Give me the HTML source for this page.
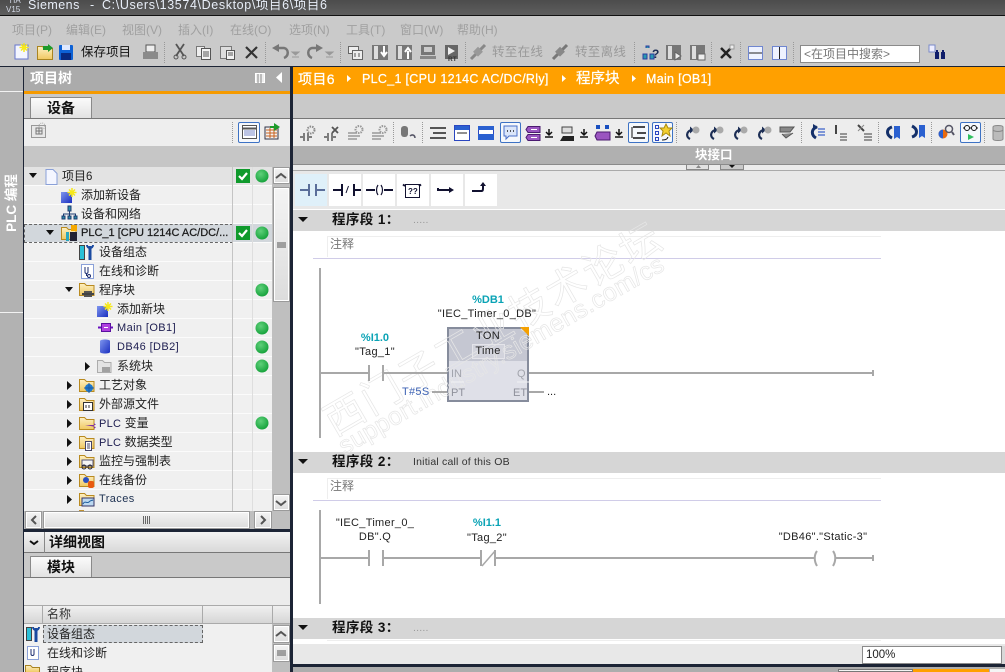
<!DOCTYPE html>
<html><head><meta charset="utf-8">
<style>
html,body{margin:0;padding:0;background:#fff}
#p{position:relative;width:1005px;height:672px;overflow:hidden;background:#fff;font-family:"Liberation Sans","Noto Sans CJK SC",sans-serif;font-size:12px;color:#222}
#p div{position:absolute}
.t{white-space:nowrap;line-height:16px;height:16px}
.m{color:#a0a0a0;top:22px;font-size:12px}
.g{color:#9a9a9a;top:44px;font-size:12.5px;letter-spacing:.3px}
.r{left:24px;width:248px;height:18px;background:#f0f0f0;border-bottom:1px solid #fbfbfb}
.c{text-align:center;font-size:11px;color:#222;letter-spacing:.3px}
.ti{color:#0aa3b5;font-weight:bold;font-size:11px;text-align:center}
.nh{left:293px;width:712px;background:#d6d6d6;height:21px}
.nt{left:332px;font-weight:bold;font-size:13.5px;color:#111;letter-spacing:.4px}
.nn{left:413px;font-size:10.5px;color:#333;letter-spacing:.2px}
.tab{left:30px;width:62px;height:21px;background:linear-gradient(#fbfbfb,#e2e2e2);border:1px solid #8a8a8a;border-bottom:0;border-radius:1px 1px 0 0;box-sizing:border-box;text-align:center;font-weight:bold;font-size:14px;line-height:20px;color:#111}
.lb{top:174px;width:32px;height:32px;background:#fff}
.btn{background:linear-gradient(#f4f4f4,#dcdcdc);border:1px solid #9a9a9a;box-sizing:border-box;box-shadow:inset 0 0 0 1px #fff}
.wm{color:transparent;-webkit-text-stroke:.7px #e6e6e6;white-space:nowrap;transform-origin:0 100%;transform:rotate(-30deg)}
.sel{top:122px;width:21px;height:21px;border:1px solid #3d72c4;border-radius:2px;box-sizing:border-box;background:#f5f8fc}
.bc{top:71px;color:#fff;-webkit-text-stroke:.25px #fff}
</style></head><body>
<div id="p">
<!-- title -->
<div style="left:0;top:0;width:1005px;height:15px;background:linear-gradient(#4c4c4c,#5e5e5e)"></div>
<div style="left:0;top:15px;width:1005px;height:1px;background:#111"></div>
<div class="t" style="left:6px;top:-4px;font-size:8px;line-height:9px;height:18px;color:#d5dbe8">&nbsp;TIA<br>V15</div>
<div class="t" style="left:28px;top:-3px;color:#e8eef8;font-size:12.5px;letter-spacing:.45px">Siemens</div>
<div class="t" style="left:90px;top:-3px;color:#e8eef8;font-size:12.5px">-</div>
<div class="t" style="left:102px;top:-3px;color:#e8eef8;font-size:12.5px;letter-spacing:.62px">C:\Users\13574\Desktop\项目6\项目6</div>
<!-- menu -->
<div style="left:0;top:16px;width:1005px;height:50px;background:#cacaca"></div>
<div class="t m" style="left:12px">项目(P)</div><div class="t m" style="left:66px">编辑(E)</div><div class="t m" style="left:122px">视图(V)</div><div class="t m" style="left:178px">插入(I)</div><div class="t m" style="left:230px">在线(O)</div><div class="t m" style="left:289px">选项(N)</div><div class="t m" style="left:346px">工具(T)</div><div class="t m" style="left:400px">窗口(W)</div><div class="t m" style="left:457px">帮助(H)</div>
<div class="t" style="left:81px;top:44px;font-size:12.5px;color:#111">保存项目</div>
<div class="t g" style="left:492px">转至在线</div><div class="t g" style="left:575px">转至离线</div>
<div style="left:800px;top:45px;width:120px;height:18px;background:#fff;border:1px solid #8a8a8a;box-sizing:border-box"></div>
<div class="t" style="left:804px;top:46px;color:#777;font-size:12px">&lt;在项目中搜索&gt;</div>
<div style="left:0;top:66px;width:1005px;height:1px;background:#1c2435"></div>
<!-- left strip -->
<div style="left:0;top:67px;width:23px;height:605px;background:#b2b2b2"></div>
<div style="left:0;top:91px;width:23px;height:1px;background:#f2f2f2"></div>
<div style="left:0;top:312px;width:23px;height:1px;background:#f2f2f2"></div>
<div class="t" style="left:-18px;top:195px;width:60px;text-align:center;color:#fff;font-weight:bold;font-size:13.5px;transform:rotate(-90deg)">PLC 编程</div>
<div style="left:23px;top:67px;width:1px;height:605px;background:#1c2435"></div>
<div style="left:290px;top:67px;width:3px;height:605px;background:#1c2435"></div>
<!-- project tree -->
<div style="left:24px;top:67px;width:266px;height:24px;background:#ababab"></div>
<div class="t" style="left:30px;top:70px;color:#fff;font-weight:bold;font-size:14px">项目树</div>
<div style="left:24px;top:91px;width:266px;height:3px;background:#f59a00"></div>
<div style="left:24px;top:94px;width:266px;height:24px;background:#c9c9c9"></div>
<div style="left:24px;top:118px;width:266px;height:1px;background:#777"></div>
<div class="tab" style="top:97px">设备</div>
<div style="left:24px;top:119px;width:266px;height:27px;background:#eeeeee"></div>
<div style="left:24px;top:146px;width:266px;height:21px;background:#c6c6c6"></div>
<div style="left:238px;top:122px;width:22px;height:21px;border:1px solid #3d72c4;box-sizing:border-box;border-radius:2px;background:#f6f8fb"></div>
<div style="left:272px;top:167px;width:18px;height:345px;background:#bfbfbf"></div>
<div class="r" style="top:167px;background:#e3e3e3"></div>
<div class="r" style="top:186px"></div><div class="r" style="top:205px"></div>
<div class="r" style="top:224px;background:#d2d7dc"></div>
<div style="left:24px;top:224px;width:209px;height:19px;border:1px dashed #666;box-sizing:border-box"></div>
<div class="r" style="top:243px"></div><div class="r" style="top:262px"></div><div class="r" style="top:281px"></div><div class="r" style="top:300px"></div><div class="r" style="top:319px"></div><div class="r" style="top:338px"></div><div class="r" style="top:357px"></div><div class="r" style="top:376px"></div><div class="r" style="top:395px"></div><div class="r" style="top:414px"></div><div class="r" style="top:433px"></div><div class="r" style="top:452px"></div><div class="r" style="top:471px"></div><div class="r" style="top:490px;height:21px"></div>
<div style="left:232px;top:167px;width:1px;height:344px;background:#c4c4c4"></div>
<div style="left:252px;top:167px;width:1px;height:344px;background:#dedede"></div>
<div class="t" style="left:62px;top:168px">项目<span style="font-size:11.5px">6</span></div>
<div class="t" style="left:81px;top:187px">添加新设备</div>
<div class="t" style="left:81px;top:206px">设备和网络</div>
<div class="t" style="left:81px;top:225px;font-size:11px;-webkit-text-stroke:.25px #1a1a1a;color:#1a1a1a">PLC_1 [CPU 1214C AC/DC/...</div>
<div class="t" style="left:99px;top:244px">设备组态</div>
<div class="t" style="left:99px;top:263px">在线和诊断</div>
<div class="t" style="left:99px;top:282px">程序块</div>
<div class="t" style="left:117px;top:301px">添加新块</div>
<div class="t" style="left:117px;top:320px;font-size:11px;letter-spacing:.4px;color:#1d1d50">Main [OB1]</div>
<div class="t" style="left:117px;top:339px;font-size:11px;letter-spacing:.4px;color:#1d1d50">DB46 [DB2]</div>
<div class="t" style="left:117px;top:358px">系统块</div>
<div class="t" style="left:99px;top:377px">工艺对象</div>
<div class="t" style="left:99px;top:396px">外部源文件</div>
<div class="t" style="left:99px;top:415px"><span style="font-size:11px;color:#1d1d50;letter-spacing:.3px">PLC</span> 变量</div>
<div class="t" style="left:99px;top:434px"><span style="font-size:11px;color:#1d1d50;letter-spacing:.3px">PLC</span> 数据类型</div>
<div class="t" style="left:99px;top:453px">监控与强制表</div>
<div class="t" style="left:99px;top:472px">在线备份</div>
<div class="t" style="left:99px;top:491px;font-size:11px;letter-spacing:.4px;color:#1d3050">Traces</div>
<!-- tree scroll -->
<div class="btn" style="left:273px;top:167px;width:17px;height:17px"></div>
<div class="btn" style="left:273px;top:187px;width:17px;height:115px"></div>
<div class="btn" style="left:273px;top:494px;width:17px;height:17px"></div>
<div style="left:24px;top:511px;width:248px;height:19px;background:#bfbfbf"></div>
<div style="left:272px;top:511px;width:18px;height:19px;background:#bfbfbf"></div>
<div class="btn" style="left:25px;top:511px;width:17px;height:18px"></div>
<div class="btn" style="left:43px;top:511px;width:207px;height:18px"></div>
<div class="btn" style="left:254px;top:511px;width:18px;height:18px"></div>
<div style="left:24px;top:529px;width:266px;height:3px;background:#1c2435"></div>
<!-- detail -->
<div style="left:24px;top:532px;width:266px;height:21px;background:linear-gradient(#f2f2f2,#d9d9d9);border-bottom:1px solid #777;box-sizing:border-box"></div>
<div style="left:44px;top:532px;width:1px;height:21px;background:#888"></div>
<div class="t" style="left:49px;top:534px;font-weight:bold;font-size:14px;color:#111">详细视图</div>
<div style="left:24px;top:553px;width:266px;height:25px;background:#c9c9c9"></div>
<div style="left:24px;top:577px;width:266px;height:1px;background:#777"></div>
<div class="tab" style="top:556px">模块</div>
<div style="left:24px;top:578px;width:266px;height:27px;background:#ececec"></div>
<div style="left:24px;top:605px;width:266px;height:19px;background:linear-gradient(#f0f0f0,#d6d6d6);border-top:1px solid #aaa;border-bottom:1px solid #aaa;box-sizing:border-box"></div>
<div style="left:42px;top:605px;width:1px;height:19px;background:#aaa"></div>
<div style="left:202px;top:605px;width:1px;height:19px;background:#aaa"></div>
<div style="left:272px;top:605px;width:1px;height:19px;background:#aaa"></div>
<div class="t" style="left:47px;top:606px;color:#333">名称</div>
<div style="left:24px;top:624px;width:248px;height:48px;background:#f0f0f0"></div>
<div style="left:272px;top:624px;width:18px;height:48px;background:#bfbfbf"></div>
<div style="left:43px;top:625px;width:160px;height:18px;background:#d2d7dc;border:1px dashed #666;box-sizing:border-box"></div>
<div class="t" style="left:47px;top:626px">设备组态</div>
<div class="t" style="left:47px;top:645px">在线和诊断</div>
<div class="t" style="left:47px;top:664px">程序块</div>
<div class="btn" style="left:273px;top:625px;width:17px;height:18px"></div>
<div class="btn" style="left:273px;top:644px;width:17px;height:18px"></div>
<!-- main -->
<div style="left:293px;top:67px;width:712px;height:27px;background:#ffa000"></div>
<div class="t bc" style="left:298px;font-size:14px;letter-spacing:.4px">项目6</div>
<div class="t bc" style="left:362px;font-size:12.5px;letter-spacing:.3px">PLC_1 [CPU 1214C AC/DC/Rly]</div>
<div class="t bc" style="left:576px;font-size:14.5px">程序块</div>
<div class="t bc" style="left:646px;font-size:12.5px;letter-spacing:.3px">Main [OB1]</div>
<div style="left:293px;top:94px;width:712px;height:24px;background:#c9c9c9"></div>
<div style="left:293px;top:118px;width:712px;height:1px;background:#777"></div>
<div style="left:293px;top:119px;width:712px;height:27px;background:#ededed"></div>
<div style="left:293px;top:146px;width:712px;height:18px;background:#b0b0b0"></div>
<div class="t" style="left:695px;top:147px;color:#fff;font-weight:bold;font-size:12.5px">块接口</div>
<div style="left:293px;top:164px;width:712px;height:1px;background:#8a8a8a"></div>
<div style="left:293px;top:165px;width:712px;height:6px;background:#ececec"></div>
<div style="left:686px;top:165px;width:23px;height:5px;background:#e2e2e2;border:1px solid #888;border-top:0;box-sizing:border-box"></div>
<div style="left:720px;top:165px;width:24px;height:5px;background:#c8c8c8;border:1px solid #888;border-top:0;box-sizing:border-box"></div>
<div style="left:293px;top:171px;width:712px;height:38px;background:#e8e8e8"></div>
<div style="left:293px;top:170px;width:712px;height:1px;background:#aaa"></div>
<div class="lb" style="left:295px;background:#dff0f9"></div><div class="lb" style="left:329px"></div><div class="lb" style="left:363px"></div><div class="lb" style="left:397px"></div><div class="lb" style="left:431px"></div><div class="lb" style="left:465px"></div>
<!-- selected buttons -->
<div class="sel" style="left:500px;"></div><div class="sel" style="left:628px"></div><div class="sel" style="left:652px"></div><div class="sel" style="left:960px"></div>
<!-- networks -->
<div class="nh" style="top:210px"></div><div class="nh" style="top:452px"></div><div class="nh" style="top:618px"></div>
<div class="t nt" style="top:212px">程序段 1：</div>
<div class="t nn" style="top:212px;color:#999">.....</div>
<div class="t nt" style="top:454px">程序段 2：</div>
<div class="t nn" style="top:454px">Initial call of this OB</div>
<div class="t nt" style="top:620px">程序段 3：</div>
<div class="t nn" style="top:620px;color:#999">.....</div>
<div style="left:327px;top:236px;width:554px;height:21px;border-left:1px solid #eee;border-top:1px solid #eee;box-sizing:border-box"></div>
<div class="t" style="left:330px;top:236px;color:#777">注释</div>
<div style="left:313px;top:258px;width:568px;height:1px;background:#d0cce8"></div>
<div style="left:327px;top:478px;width:554px;height:21px;border-left:1px solid #eee;border-top:1px solid #eee;box-sizing:border-box"></div>
<div class="t" style="left:330px;top:478px;color:#777">注释</div>
<div style="left:313px;top:500px;width:568px;height:1px;background:#d0cce8"></div>
<!-- block -->
<div style="left:447px;top:327px;width:82px;height:75px;background:#dfe0e8;border:2px solid #868c9c;box-sizing:border-box"></div>
<div style="left:449px;top:329px;width:78px;height:32px;background:#c5c7d2"></div>
<div style="left:472px;top:344px;width:33px;height:15px;background:#d2d3dc;border:1px solid #e4e4ea;box-sizing:border-box"></div>
<!-- watermark -->
<div class="t wm" style="left:337px;top:397px;font-size:40px;line-height:44px;height:44px;font-family:'Noto Sans CJK SC',sans-serif;letter-spacing:2.6px">西门子工业技术论坛</div>
<div class="t wm" style="left:348px;top:431px;font-size:25px;line-height:30px;height:30px;letter-spacing:.3px">support.industry.siemens.com/cs</div>
<div class="t c" style="left:447px;top:328px;width:82px">TON</div>
<div class="t c" style="left:447px;top:343px;width:82px">Time</div>
<div class="t" style="left:451px;top:366px;color:#a2a4ac;font-size:11px">IN</div>
<div class="t" style="left:517px;top:366px;color:#a2a4ac;font-size:11px">Q</div>
<div class="t" style="left:451px;top:385px;color:#8f919c;font-size:11px">PT</div>
<div class="t" style="left:513px;top:385px;color:#8f919c;font-size:11px">ET</div>
<div class="t ti" style="left:447px;top:292px;width:82px">%DB1</div>
<div class="t c" style="left:417px;top:306px;width:140px">"IEC_Timer_0_DB"</div>
<div class="t ti" style="left:345px;top:330px;width:60px">%I1.0</div>
<div class="t c" style="left:345px;top:344px;width:60px">"Tag_1"</div>
<div class="t" style="left:402px;top:384px;font-size:11px;color:#3c62b4;letter-spacing:.3px">T#5S</div>
<div class="t" style="left:547px;top:384px;font-size:11px">...</div>
<div class="t c" style="left:315px;top:515px;width:120px">"IEC_Timer_0_</div>
<div class="t c" style="left:315px;top:529px;width:120px">DB".Q</div>
<div class="t ti" style="left:457px;top:515px;width:60px">%I1.1</div>
<div class="t c" style="left:457px;top:530px;width:60px">"Tag_2"</div>
<div class="t c" style="left:763px;top:529px;width:120px">"DB46"."Static-3"</div>
<!-- bottom -->
<div style="left:293px;top:644px;width:712px;height:20px;background:#e8e8e8"></div>
<div style="left:293px;top:639px;width:712px;height:5px;background:#fff"></div>
<div style="left:327px;top:640px;width:554px;height:1px;background:#eee"></div>
<div style="left:862px;top:646px;width:140px;height:18px;background:#fff;border:1px solid #8a8a8a;box-sizing:border-box"></div>
<div class="t" style="left:866px;top:647px;font-size:11.5px;color:#222">100%</div>
<div style="left:1002px;top:646px;width:3px;height:18px;background:#d8d8d8"></div>
<div style="left:293px;top:664px;width:712px;height:3px;background:#1c2435"></div>
<div style="left:293px;top:667px;width:712px;height:5px;background:#adadad"></div>
<div style="left:838px;top:669px;width:75px;height:3px;background:#f4f4f4;border:1px solid #777;box-sizing:border-box"></div>
<div style="left:913px;top:669px;width:76px;height:3px;background:#ffa000"></div>
<div style="left:990px;top:669px;width:15px;height:3px;background:#f4f4f4"></div>
<!-- graphics overlay -->
<svg style="position:absolute;left:0;top:0" width="1005" height="672" viewBox="0 0 1005 672" fill="none">
<defs>
<radialGradient id="gd" cx=".4" cy=".35" r=".7"><stop offset="0" stop-color="#5fd07a"/><stop offset="1" stop-color="#12a038"/></radialGradient>
<linearGradient id="fo" x1="0" y1="0" x2="0" y2="1"><stop offset="0" stop-color="#fdf0c4"/><stop offset="1" stop-color="#f0c860"/></linearGradient>
<linearGradient id="bl" x1="0" y1="0" x2="1" y2="1"><stop offset="0" stop-color="#7f96ee"/><stop offset="1" stop-color="#1a2fc0"/></linearGradient>
<symbol id="dot" width="14" height="14" overflow="visible"><circle cx="7" cy="7" r="6.5" fill="url(#gd)"/></symbol>
<symbol id="chk" width="15" height="15" overflow="visible"><rect x="0" y="0" width="14" height="14" fill="#0f9a2c"/><path d="M3 7l3 3 5-6" stroke="#fff" stroke-width="2.2"/></symbol>
<symbol id="dn" width="9" height="5" overflow="visible"><path d="M0 0h8l-4 5z" fill="#111"/></symbol>
<symbol id="rt" width="5" height="9" overflow="visible"><path d="M0 0v9l5-4.5z" fill="#111"/></symbol>
<symbol id="fld" width="16" height="15" overflow="visible"><path d="M.5 1.5h5l2 2h7.500v10h-14.500z" fill="url(#fo)" stroke="#b98a20"/></symbol>
<symbol id="star" width="16" height="15" overflow="visible"><rect x="0" y="4" width="11" height="11" fill="url(#bl)"/><path d="M11 0v9M6.500 4.500h9M8 1.500l6 6M14 1.500l-6 6" stroke="#f6e81a" stroke-width="1.500"/></symbol>
<symbol id="g1" width="16" height="16" overflow="visible"><path d="M0 12h4M4 8v8M8 8v8M8 12h4" stroke="#7d7d7d" stroke-width="2"/><circle cx="11" cy="5" r="3.500" stroke="#8a8a8a" stroke-dasharray="1.500 1" stroke-width="2"/></symbol>
<symbol id="g2" width="16" height="16" overflow="visible"><path d="M0 12h4M4 8v8M8 8v8M8 12h4" stroke="#7d7d7d" stroke-width="2"/><path d="M8 2l6 6M14 2l-6 6" stroke="#555" stroke-width="1.800"/></symbol>
<symbol id="g3" width="16" height="16" overflow="visible"><path d="M0 8h9M0 11h12M0 14h9" stroke="#999" stroke-width="1.500"/><circle cx="11" cy="4.500" r="3.500" stroke="#999" stroke-dasharray="1.500 1" stroke-width="2"/></symbol>
<symbol id="lst" width="16" height="16" overflow="visible"><path d="M0 3h16M3 8h13M0 13h16" stroke="#555" stroke-width="2"/></symbol>
<symbol id="bbx" width="16" height="16" overflow="visible"><rect x=".5" y=".5" width="15" height="15" fill="#fff" stroke="#2a46c0"/><rect x="1" y="1" width="14" height="4" fill="#2a60d0"/><path d="M3 8h10" stroke="#222"/></symbol>
<symbol id="ar" width="8" height="9" overflow="visible"><path d="M4 0v5M1 3l3 3 3-3" stroke="#111" stroke-width="1.500"/><path d="M0 8h8" stroke="#111" stroke-width="1.500"/></symbol>
<symbol id="tag" width="16" height="16" overflow="visible"><path d="M3 1.500h12v6h-12l-2-3zM3 9.500h12v6h-12l-2-3z" fill="#9a55c0" stroke="#4a1a70"/><path d="M6 4.500h6M6 12.500h6" stroke="#fff"/></symbol>
<symbol id="cv" width="16" height="16" overflow="visible"><path d="M6 14c-4-2-4-7 1-9" stroke="#1c2e55" stroke-width="2.200"/><path d="M6 1.500l4 3.500-4 3.500z" fill="#1c2e55"/><circle cx="12" cy="5" r="3.500" fill="#aaa"/></symbol>
</defs>
<!-- toolbar row -->
<g>
<rect x="15" y="45" width="13" height="14" fill="#f4f6ff" stroke="#6677cc"/><path d="M24 43v9M19.500 47.500h9M21 44.500l6 6M27 44.500l-6 6" stroke="#f6e81a" stroke-width="1.500"/>
<path d="M37.500 46.500h5l2 2h8v11h-15z" fill="url(#fo)" stroke="#a98420"/><path d="M43 46h5v-2l5 4-5 4v-2h-5z" fill="#1d9a2a"/>
<rect x="59" y="45" width="14" height="15" rx="1" fill="#0d62d6"/><rect x="62" y="45" width="8" height="5" fill="#dfe9ff"/><rect x="61" y="53" width="10" height="7" fill="#092a80"/>
<rect x="146" y="45" width="9" height="7" fill="#eee" stroke="#555"/><rect x="143" y="52" width="15" height="7" fill="#8a8a8a"/>
<path d="M176 44l8 12M184 44l-8 12" stroke="#555" stroke-width="1.800"/><circle cx="176" cy="57" r="2" stroke="#555"/><circle cx="184" cy="57" r="2" stroke="#555"/>
<rect x="196.500" y="46.500" width="8" height="10" fill="#eee" stroke="#777"/><rect x="201.500" y="48.500" width="9" height="11" fill="#f3f3f3" stroke="#555"/><path d="M203 52h6M203 54h6M203 56h6" stroke="#555"/>
<rect x="220.500" y="46.500" width="11" height="12" fill="#ddd" stroke="#777"/><rect x="226.500" y="50.500" width="8" height="9" fill="#f3f3f3" stroke="#555"/><path d="M228 53h5M228 55h5" stroke="#555"/>
<path d="M246 47l11 11M257 47l-11 11" stroke="#333" stroke-width="2.200"/>
<path d="M275 48h9c5 1 5 8 0 10" stroke="#777" stroke-width="2.500"/><path d="M272 48l7-4v8z" fill="#777"/>
<path d="M292 52h7l-3.500 3zM292 57h7" fill="#999" stroke="#999"/>
<path d="M320 48h-8c-5 1-5 8 0 10" stroke="#777" stroke-width="2.500"/><path d="M323 48l-7-4v8z" fill="#777"/>
<path d="M326 52h7l-3.500 3zM326 57h7" fill="#999" stroke="#999"/>
<rect x="348.500" y="46.500" width="10" height="7" fill="#eee" stroke="#666"/><rect x="352.500" y="50.500" width="10" height="9" fill="#eee" stroke="#666"/><path d="M355 53v4M359 53v4" stroke="#555"/>
<rect x="372" y="45" width="16" height="15" fill="#777"/><rect x="374" y="46" width="4" height="13" fill="#ddd"/><path d="M384 46v8M381 52l3 4 3-4" stroke="#fff" stroke-width="2"/>
<rect x="396" y="45" width="16" height="15" fill="#777"/><rect x="398" y="46" width="4" height="13" fill="#ddd"/><path d="M408 59v-8M405 52l3-4 3 4" stroke="#fff" stroke-width="2"/>
<rect x="421" y="45" width="14" height="10" fill="#777"/><rect x="424" y="47" width="8" height="5" fill="#ccc"/><rect x="420" y="56" width="16" height="3" fill="#888"/>
<rect x="445" y="45" width="13" height="14" fill="#666"/><path d="M448 47l7 4-7 4z" fill="#eee"/><text x="448" y="61" font-size="6.500" font-weight="bold" fill="#333" font-family="Liberation Sans">RT</text>
<path d="M471 59l6-6M479 51l6-6" stroke="#888" stroke-width="3"/><rect x="475" y="48" width="7" height="7" transform="rotate(45 478 51)" fill="#999"/>
<path d="M553 59l6-6M561 51l6-6" stroke="#777" stroke-width="3"/><rect x="557" y="48" width="7" height="7" transform="rotate(45 560 51)" fill="#888"/>
<path d="M646 48v-2h3v2M643 54h4v5h-4zM650 54h4v5h-4z" fill="#2a9ab0" stroke="#2a3ea0"/><text x="652" y="58" font-size="12" font-weight="bold" fill="#1c2e55" font-family="Liberation Sans">?</text>
<rect x="666" y="45" width="15" height="15" fill="#777"/><rect x="668" y="46" width="4" height="13" fill="#ddd"/><path d="M675 52l6 4-6 4z" fill="#eee" stroke="#666"/>
<rect x="690" y="45" width="15" height="15" fill="#777"/><rect x="692" y="46" width="4" height="13" fill="#ddd"/><rect x="698" y="54" width="7" height="6" fill="#eee" stroke="#666"/>
<path d="M721 48l10 10M731 48l-10 10" stroke="#222" stroke-width="2.500"/><rect x="730" y="45" width="4" height="4" fill="#eee" stroke="#999"/>
<rect x="748.500" y="46.500" width="14" height="13" fill="#eef2ff" stroke="#6f86d0"/><path d="M749 53h13" stroke="#222"/>
<rect x="772.500" y="46.500" width="14" height="13" fill="#eef2ff" stroke="#6f86d0"/><path d="M779.500 47v12" stroke="#222"/>
<rect x="929" y="45" width="6" height="7" fill="#eef" stroke="#7a8ac8"/><rect x="935" y="52" width="4" height="7" fill="#101e6a"/><rect x="941" y="52" width="4" height="7" fill="#101e6a"/><path d="M937 50v3M943 50v3" stroke="#101e6a" stroke-width="2"/>
<!-- separators -->
<path d="M164.500 42v21M265.500 42v21M340.500 42v21M465.500 42v21M634.500 42v21M711.500 42v21M740.500 42v21M793.500 42v21" stroke="#999" stroke-dasharray="1 1"/>
<!-- tree head icons -->
<rect x="255.500" y="73.500" width="9" height="9" fill="#eee" stroke="#fff"/><path d="M258 74v9M261 74v9" stroke="#888"/>
<path d="M282 72v11l-6-5.500z" fill="#fff"/>
<!-- breadcrumb arrows -->
<path d="M347 75v7l4-3.500zM562 75v7l4-3.500zM632 75v7l4-3.500z" fill="#fff"/>
<!-- tree toolbar -->
<rect x="31.500" y="125.500" width="14" height="12" fill="#e8e8e8" stroke="#999"/><path d="M36 128h6v6h-6zM39 128v6M36 131h6" stroke="#777"/><circle cx="42" cy="126" r="3" stroke="#aaa" stroke-dasharray="1 1"/>
<path d="M232.500 122v22" stroke="#999" stroke-dasharray="1 1"/>
<rect x="242.500" y="125.500" width="14" height="13" fill="#fff" stroke="#555"/><path d="M243 128.500h13" stroke="#555" stroke-width="2"/><path d="M244 131h11M244 133h11M244 135h11" stroke="#7a8ac8"/>
<rect x="265" y="127" width="13" height="12" fill="#f2f2f2" stroke="#334"/><path d="M266 130h11M266 133h11M266 136h11M270 128v10M274 128v10" stroke="#c8601e"/><path d="M270 126h4v-3l6 4-6 4v-3h-4z" fill="#1d9a2a"/>
<!-- tree arrows -->
<use href="#dn" x="29" y="173"/><use href="#dn" x="46" y="230"/><use href="#dn" x="65" y="287"/>
<use href="#rt" x="85" y="362"/><use href="#rt" x="67" y="381"/><use href="#rt" x="67" y="400"/><use href="#rt" x="67" y="419"/><use href="#rt" x="67" y="438"/><use href="#rt" x="67" y="457"/><use href="#rt" x="67" y="476"/><use href="#rt" x="67" y="495"/>
<!-- status -->
<use href="#chk" x="236" y="169"/><use href="#chk" x="236" y="226"/>
<use href="#dot" x="255" y="169"/><use href="#dot" x="255" y="226"/><use href="#dot" x="255" y="283"/><use href="#dot" x="255" y="321"/><use href="#dot" x="255" y="340"/><use href="#dot" x="255" y="359"/><use href="#dot" x="255" y="416"/>
<!-- tree icons -->
<path d="M46 169.500h7l4 4v11h-11z" fill="#f4f6ff" stroke="#8aa0d8"/>
<use href="#star" x="61" y="188"/>
<path d="M68 206h3v5h-3zM62 216h3v3h-3zM68 216h3v3h-3zM74 216h3v3h-3z" fill="#2a8fa8" stroke="#1d3a70"/><path d="M69.500 211v5M63.500 216v-2h12v2" stroke="#1d3a70"/>
<use href="#fld" x="61" y="226"/><rect x="71" y="225" width="6" height="6" fill="#f5a800"/><rect x="66" y="232" width="3" height="9" fill="#2aa8c0"/><rect x="70" y="232" width="7" height="9" fill="#223"/>
<rect x="79.500" y="245.500" width="5" height="14" fill="#2ac0d8" stroke="#444"/><path d="M90 246v14" stroke="#1a4aa0" stroke-width="3"/><path d="M87 245c0 4 6 4 6 0" stroke="#1a4aa0" stroke-width="2"/>
<rect x="81.500" y="264.500" width="12" height="14" fill="#fff" stroke="#8aa0d8"/><path d="M85 267v5c0 2 3 2 3 0v-5M86.500 274v2" stroke="#1d2e70"/><circle cx="89" cy="276" r="1.500" stroke="#1d2e70"/>
<use href="#fld" x="79" y="282"/><path d="M84 291h8v6h-8z" fill="#555"/><path d="M82 294h12" stroke="#444" stroke-width="2"/>
<use href="#star" x="97" y="302"/>
<path d="M98 327.500h4M110 327.500h3" stroke="#6a10c0" stroke-width="2"/><rect x="101.500" y="323.500" width="9" height="8" fill="#b040e0" stroke="#5a10a0"/><path d="M104 327.500h4" stroke="#fff"/>
<path d="M100 341c0-2 10-2 10 0v11c0 2-10 2-10 0z" fill="url(#bl)"/>
<g opacity=".65"><path d="M97.500 360.500h5l2 2h6.500v10h-13.500z" fill="#ddd" stroke="#888"/><path d="M102 367h8v5h-8z" fill="#777"/></g>
<use href="#fld" x="79" y="378"/><circle cx="89" cy="388" r="4" fill="#1e7ad0"/><path d="M84 388h10M89 383v10" stroke="#1e5aa0"/>
<use href="#fld" x="79" y="397"/><rect x="83.500" y="402.500" width="9" height="8" fill="#fff" stroke="#333"/><path d="M86 405v3M89 405v3" stroke="#333"/>
<use href="#fld" x="79" y="416"/><path d="M85 425h11l-2-2v6l2-2z" fill="#8030a8"/>
<use href="#fld" x="79" y="435"/><rect x="85.500" y="441.500" width="6" height="9" fill="#fff" stroke="#446"/><path d="M87 444h3M87 446h3M87 448h3" stroke="#446"/>
<use href="#fld" x="79" y="454"/><rect x="82" y="460" width="11" height="6" fill="#f5f5f5" stroke="#557"/><circle cx="84" cy="467" r="2" stroke="#223"/><circle cx="90" cy="467" r="2" stroke="#223"/>
<use href="#fld" x="79" y="473"/><circle cx="86" cy="480" r="3" fill="#2a50c0"/><rect x="88" y="481" width="6" height="7" rx="2" fill="#e85a10"/>
<use href="#fld" x="79" y="492"/><rect x="82" y="498" width="12" height="8" fill="#bcd8f0" stroke="#336"/><path d="M83 504c2-4 4 0 6-2s2-1 4-2" stroke="#2060a0"/>
<rect x="79" y="510" width="5" height="1" fill="#c09030"/>
<!-- scroll glyphs -->
<path d="M276 178l5-4 5 4" stroke="#555" stroke-width="2"/><path d="M277 243h9M277 245h9M277 247h9" stroke="#555"/><path d="M276 501l5 4 5-4" stroke="#555" stroke-width="2"/>
<path d="M36 516l-4 4 4 4" stroke="#555" stroke-width="2"/><path d="M143.500 516v8M145.500 516v8M147.500 516v8M149.500 516v8" stroke="#666"/><path d="M261 516l4 4-4 4" stroke="#555" stroke-width="2"/>
<path d="M30 541l4 3 4-3" stroke="#111" stroke-width="2"/>
<path d="M276 636l5-4 5 4" stroke="#555" stroke-width="2"/><path d="M277 651h9M277 653h9M277 655h9" stroke="#555"/>
<!-- detail icons -->
<rect x="26.500" y="627.500" width="5" height="13" fill="#2ac0d8" stroke="#444"/><path d="M36 628v14" stroke="#1a4aa0" stroke-width="3"/><path d="M33 627c0 4 6 4 6 0" stroke="#1a4aa0" stroke-width="2"/>
<rect x="27.500" y="646.500" width="11" height="13" fill="#fff" stroke="#8aa0d8"/><path d="M31 649v5c0 2 3 2 3 0v-5" stroke="#1d2e70"/>
<path d="M25.500 665.500h5l2 2h7v5h-14z" fill="url(#fo)" stroke="#a98420"/>
<!-- main toolbar -->
<use href="#g1" x="300" y="125"/><use href="#g2" x="324" y="125"/><use href="#g3" x="348" y="125"/><use href="#g3" x="372" y="125"/>
<path d="M393.500 122v22M422.500 122v22M676.500 122v22M801.500 122v22M878.500 122v22M931.500 122v22M984.500 122v22" stroke="#999" stroke-dasharray="1 1"/>
<rect x="401" y="126" width="7" height="11" rx="3" fill="#777"/><path d="M410 136c2-2 5-1 5 2" stroke="#556" stroke-width="1.500"/>
<use href="#lst" x="430" y="125"/><use href="#bbx" x="454" y="125"/>
<rect x="478.500" y="126.500" width="15" height="13" fill="#fff" stroke="#2a46c0"/><rect x="478" y="126" width="16" height="4" fill="#2a60d0"/><rect x="478" y="134" width="16" height="6" fill="#2a60d0"/>
<path d="M504 126h13v10h-8l-3 3v-3h-2z" fill="#dbe6fa" stroke="#4a70c8"/><path d="M507 131h1M510 131h1M513 131h1" stroke="#222" stroke-width="1.500"/>
<use href="#tag" x="525" y="125"/><use href="#ar" x="545" y="129"/>
<path d="M562 127h10v6h-10z" fill="#ddd" stroke="#444"/><path d="M560 141l3-5h11v5z" fill="#222"/><use href="#ar" x="580" y="129"/>
<path d="M596 125h4v4h-4zM605 125h4v4h-4z" fill="#1a50c0"/><path d="M597 132h13v8h-13l-2-4z" fill="#9a55c0" stroke="#4a1a70"/><use href="#ar" x="615" y="129"/>
<path d="M633 127h12M637 133h9M633 138h12" stroke="#111" stroke-width="1.500"/><path d="M632 127v11" stroke="#111"/>
<rect x="655.500" y="125.500" width="3" height="3" stroke="#2a46c0"/><rect x="655.500" y="131.500" width="3" height="3" stroke="#2a46c0"/><rect x="655.500" y="137.500" width="3" height="3" stroke="#2a46c0"/><path d="M666 124l2 4h4l-3 3 1 5-4-3-4 3 1-5-3-3h4z" fill="#f4d030" stroke="#a88a10"/><path d="M668 137c-1 3-4 3-6 3" stroke="#111"/>
<use href="#cv" x="684" y="125"/><use href="#cv" x="708" y="125"/><use href="#cv" x="732" y="125"/><use href="#cv" x="756" y="125"/>
<path d="M780 127h14l-4 5h-10zM782 134l4 4 7-5" fill="#888" stroke="#555"/>
<path d="M817 127c-6 2-6 8-1 11" stroke="#14306a" stroke-width="3"/><path d="M813 124l5 3-5 3z" fill="#14306a"/><path d="M818 132h7M818 135h7M818 129h7" stroke="#5a7ad0" stroke-width="1.500"/>
<path d="M836 125v9" stroke="#444" stroke-width="2"/><path d="M840 134h7M840 137h7M840 140h7" stroke="#777" stroke-width="1.500"/>
<path d="M858 125l6 6" stroke="#444" stroke-width="2"/><path d="M858 131l6-6" stroke="#888"/><path d="M864 134h8M864 137h8M864 140h8" stroke="#777" stroke-width="1.500"/>
<path d="M892 127c-6 2-6 8 0 11" stroke="#14306a" stroke-width="3"/><path d="M894 126h6v13l-3-2-3 2z" fill="#2a60d0"/>
<path d="M918 127c-6 2-6 8 0 11" stroke="#14306a" stroke-width="3" transform="rotate(180 915 132)"/><path d="M919 125h6v13l-3-2-3 2z" fill="#2a60d0"/>
<circle cx="943" cy="134" r="4.500" fill="#e86a10"/><path d="M943 129.500a4.500 4.500 0 0 0 0 9z" fill="#2a60d0"/><circle cx="949" cy="129" r="3.500" stroke="#556" stroke-width="1.500"/><path d="M952 132l2 3" stroke="#556" stroke-width="2"/>
<circle cx="967" cy="128" r="2.500" stroke="#111"/><circle cx="974" cy="128" r="2.500" stroke="#111"/><path d="M964 128h-1M969.500 128h2M977 128h1" stroke="#111"/><path d="M968 134l6 3-6 3z" fill="#30c060"/>
<path d="M993 127c0-2 10-2 10 0v12c0 2-10 2-10 0z" fill="#bbb" stroke="#888"/><path d="M993 130c2 2 8 2 10 0" stroke="#888"/>
<!-- block iface arrows -->
<path d="M696 168l2.500-3 2.500 3z" fill="#888"/><path d="M729 165h6l-3 3z" fill="#111"/>
<!-- lad buttons -->
<path d="M300 190h9M309 184v12M316 184v12M316 190h9" stroke="#5a6e9a" stroke-width="2"/>
<path d="M333 190h9M342 184v12M354 184v12M354 190h7" stroke="#111130" stroke-width="2"/><path d="M346 193l2.500-7" stroke="#111130"/>
<path d="M366 190h9M384 190h9" stroke="#111130" stroke-width="2"/><path d="M378 185c-2 3-2 7 0 10M381 185c2 3 2 7 0 10" stroke="#111130" stroke-width="1.200"/>
<rect x="405.500" y="184.500" width="14" height="13" stroke="#111130"/><path d="M405 186l-2-1.500M419 186l2-1.500" stroke="#111130" stroke-width="2"/><text x="408" y="194" font-size="8" font-weight="bold" fill="#111130" font-family="Liberation Sans">??</text>
<path d="M438 188v2h11" stroke="#111130" stroke-width="2"/><path d="M449 187l5 3-5 3z" fill="#111130"/>
<path d="M472 191h9c2 0 2-1 2-3v-3" stroke="#111130" stroke-width="2"/><path d="M480 186l3-4 3 4z" fill="#111130"/>
<!-- net collapse -->
<path d="M298 217h10l-5 5z" fill="#111"/><path d="M298 459h10l-5 5z" fill="#111"/><path d="M298 625h10l-5 5z" fill="#111"/>
<!-- orange triangle -->
<path d="M520 327h9v9z" fill="#f5a000"/>
<path d="M451 382h13M517 382h12" stroke="#f2f2f4"/>
<!-- ladder net1 -->
<g stroke="#a8a8a8" stroke-width="2">
<path d="M320 268v170"/>
<path d="M320 373h49M369 365v16M383 365v16M383 373h64M529 373h344M432 392h15M529 392h15"/>
<path d="M873 370v6"/>
<!-- net2 -->
<path d="M320 510v94"/>
<path d="M320 558h49M369 550v16M383 550v16M383 558h98M481 550v16M495 550v16M495 558h320M836 558h37M873 555v6"/>
<path d="M482 566l13-15" stroke-width="1.500"/>
<path d="M817 551c-3 4-3 10 0 15M833 551c3 4 3 10 0 15"/>
</g>
</g>
</svg>
</div>
</body></html>
